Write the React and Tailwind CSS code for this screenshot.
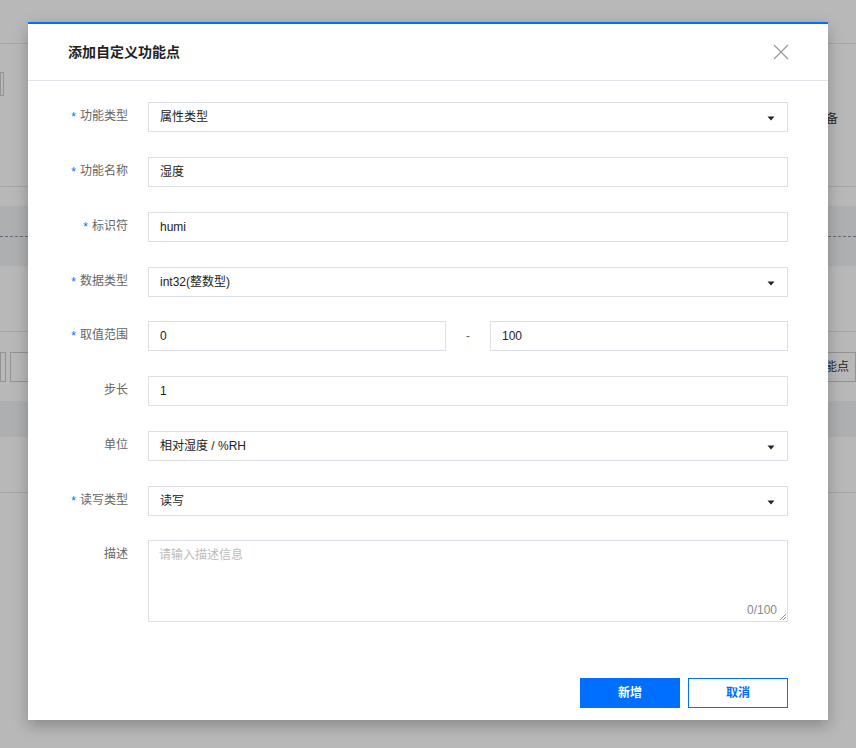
import { useState } from 'react'

const font = { fontFamily: '"Liberation Sans", "Noto Sans CJK SC", sans-serif' }

const Caret = () => (
  <svg width="8" height="5" viewBox="0 0 8 5" className="absolute right-[12px] top-[13px]">
    <path d="M0.5 0.5 L7.5 0.5 L4 4.5 Z" fill="#222" />
  </svg>
)

const Row = ({ label, required, tight, children }) => (
  <div className={tight ? 'flex items-start mb-[24px]' : 'flex items-start mb-[25px]'}>
    <div className="w-[60px] shrink-0 flex justify-end items-start pt-[5px] text-[12px] leading-[18px] text-[#666]">
      {required && <span className="text-[#006eff] mr-[4px] mt-[1px]">*</span>}
      <span>{label}</span>
    </div>
    <div className="ml-[20px] flex-1">{children}</div>
  </div>
)

const Input = ({ value, select }) => (
  <div className="relative h-[30px] border border-[#dcdfe6] bg-white flex items-center pl-[11px] text-[12px] text-[#222]">
    {value}
    {select && <Caret />}
  </div>
)

const App = () => {
  const [desc] = useState('')
  return (
    <div className="relative w-[856px] h-[748px] overflow-hidden bg-white" style={font}>
      {/* page behind the mask */}
      <div className="flex flex-col">
        <div className="h-[44px] border-b border-[#e5e5e5]" />
        <div className="h-[28px]" />
        <div className="h-[24px] w-[4px] border border-[#ccc]" />
        <div className="h-[90px] flex justify-end pr-[18px] pt-[14px] text-[12px] text-[#333]">设备</div>
        <div className="h-[20px] border-t border-[#e5e5e5]" />
        <div className="h-[60px] bg-[#f2f3f5] flex items-center">
          <div className="w-full border-t border-dashed border-[#8a93a6]" />
        </div>
        <div className="h-[65px]" />
        <div className="h-[70px] border-t border-[#e5e5e5] flex items-center justify-between text-[12px] text-[#333]">
          <div className="flex gap-[4px]">
            <div className="w-[6px] h-[30px] border border-[#ccc]" />
            <div className="w-[30px] h-[30px] border border-[#ccc]" />
          </div>
          <div className="h-[30px] border border-[#ccc] flex items-center px-[6px]">添加自定义功能点</div>
        </div>
        <div className="h-[36px] bg-[#f2f3f5]" />
        <div className="h-[56px] border-b border-[#e5e5e5]" />
      </div>

      {/* mask */}
      <div className="absolute inset-0 bg-black/[0.28] flex justify-center pt-[22px]">
        <div className="w-[800px] h-[698px] bg-white border-t-2 border-[#006eff] shadow-[0_6px_14px_rgba(0,0,0,0.25)] flex flex-col">
          <div className="h-[57px] shrink-0 flex items-center justify-between px-[40px] border-b border-[#dfe3ea]">
            <div className="text-[14px] font-bold text-[#222]">添加自定义功能点</div>
            <svg width="16" height="16" viewBox="0 0 16 16" className="mr-[-1px]">
              <path d="M1 1 L15 15 M15 1 L1 15" stroke="#999" strokeWidth="1.3" />
            </svg>
          </div>

          <div className="flex-1 px-[40px] pt-[21px]">
            <Row label="功能类型" required><Input value="属性类型" select /></Row>
            <Row label="功能名称" required><Input value="湿度" /></Row>
            <Row label="标识符" required><Input value="humi" /></Row>
            <Row label="数据类型" required tight><Input value="int32(整数型)" select /></Row>
            <Row label="取值范围" required>
              <div className="flex items-center">
                <div className="flex-1"><Input value="0" /></div>
                <div className="w-[44px] text-center text-[12px] text-[#666]">-</div>
                <div className="flex-1"><Input value="100" /></div>
              </div>
            </Row>
            <Row label="步长"><Input value="1" /></Row>
            <Row label="单位"><Input value="相对湿度 / %RH" select /></Row>
            <Row label="读写类型" required tight><Input value="读写" select /></Row>
            <Row label="描述">
              <div className="relative h-[82px] border border-[#dcdfe6] bg-white">
                <div className="pl-[10px] pt-[5px] text-[12px] leading-[18px] text-[#bbb]">{desc || '请输入描述信息'}</div>
                <div className="absolute right-[10px] bottom-[2px] text-[12px] text-[#888]">0/100</div>
                <svg width="7" height="7" viewBox="0 0 7 7" className="absolute right-[1px] bottom-[1px]">
                  <path d="M1 7 L7 1 M4 7 L7 4" stroke="#777" strokeWidth="0.8" />
                </svg>
              </div>
            </Row>
          </div>

          <div className="flex justify-end gap-[8px] px-[40px] pb-[12px]">
            <button className="w-[100px] h-[30px] bg-[#006eff] text-white text-[12px] font-bold">新增</button>
            <button className="w-[100px] h-[30px] border border-[#006eff] bg-white text-[#006eff] text-[12px] font-bold">取消</button>
          </div>
        </div>
      </div>
    </div>
  )
}

export default App
